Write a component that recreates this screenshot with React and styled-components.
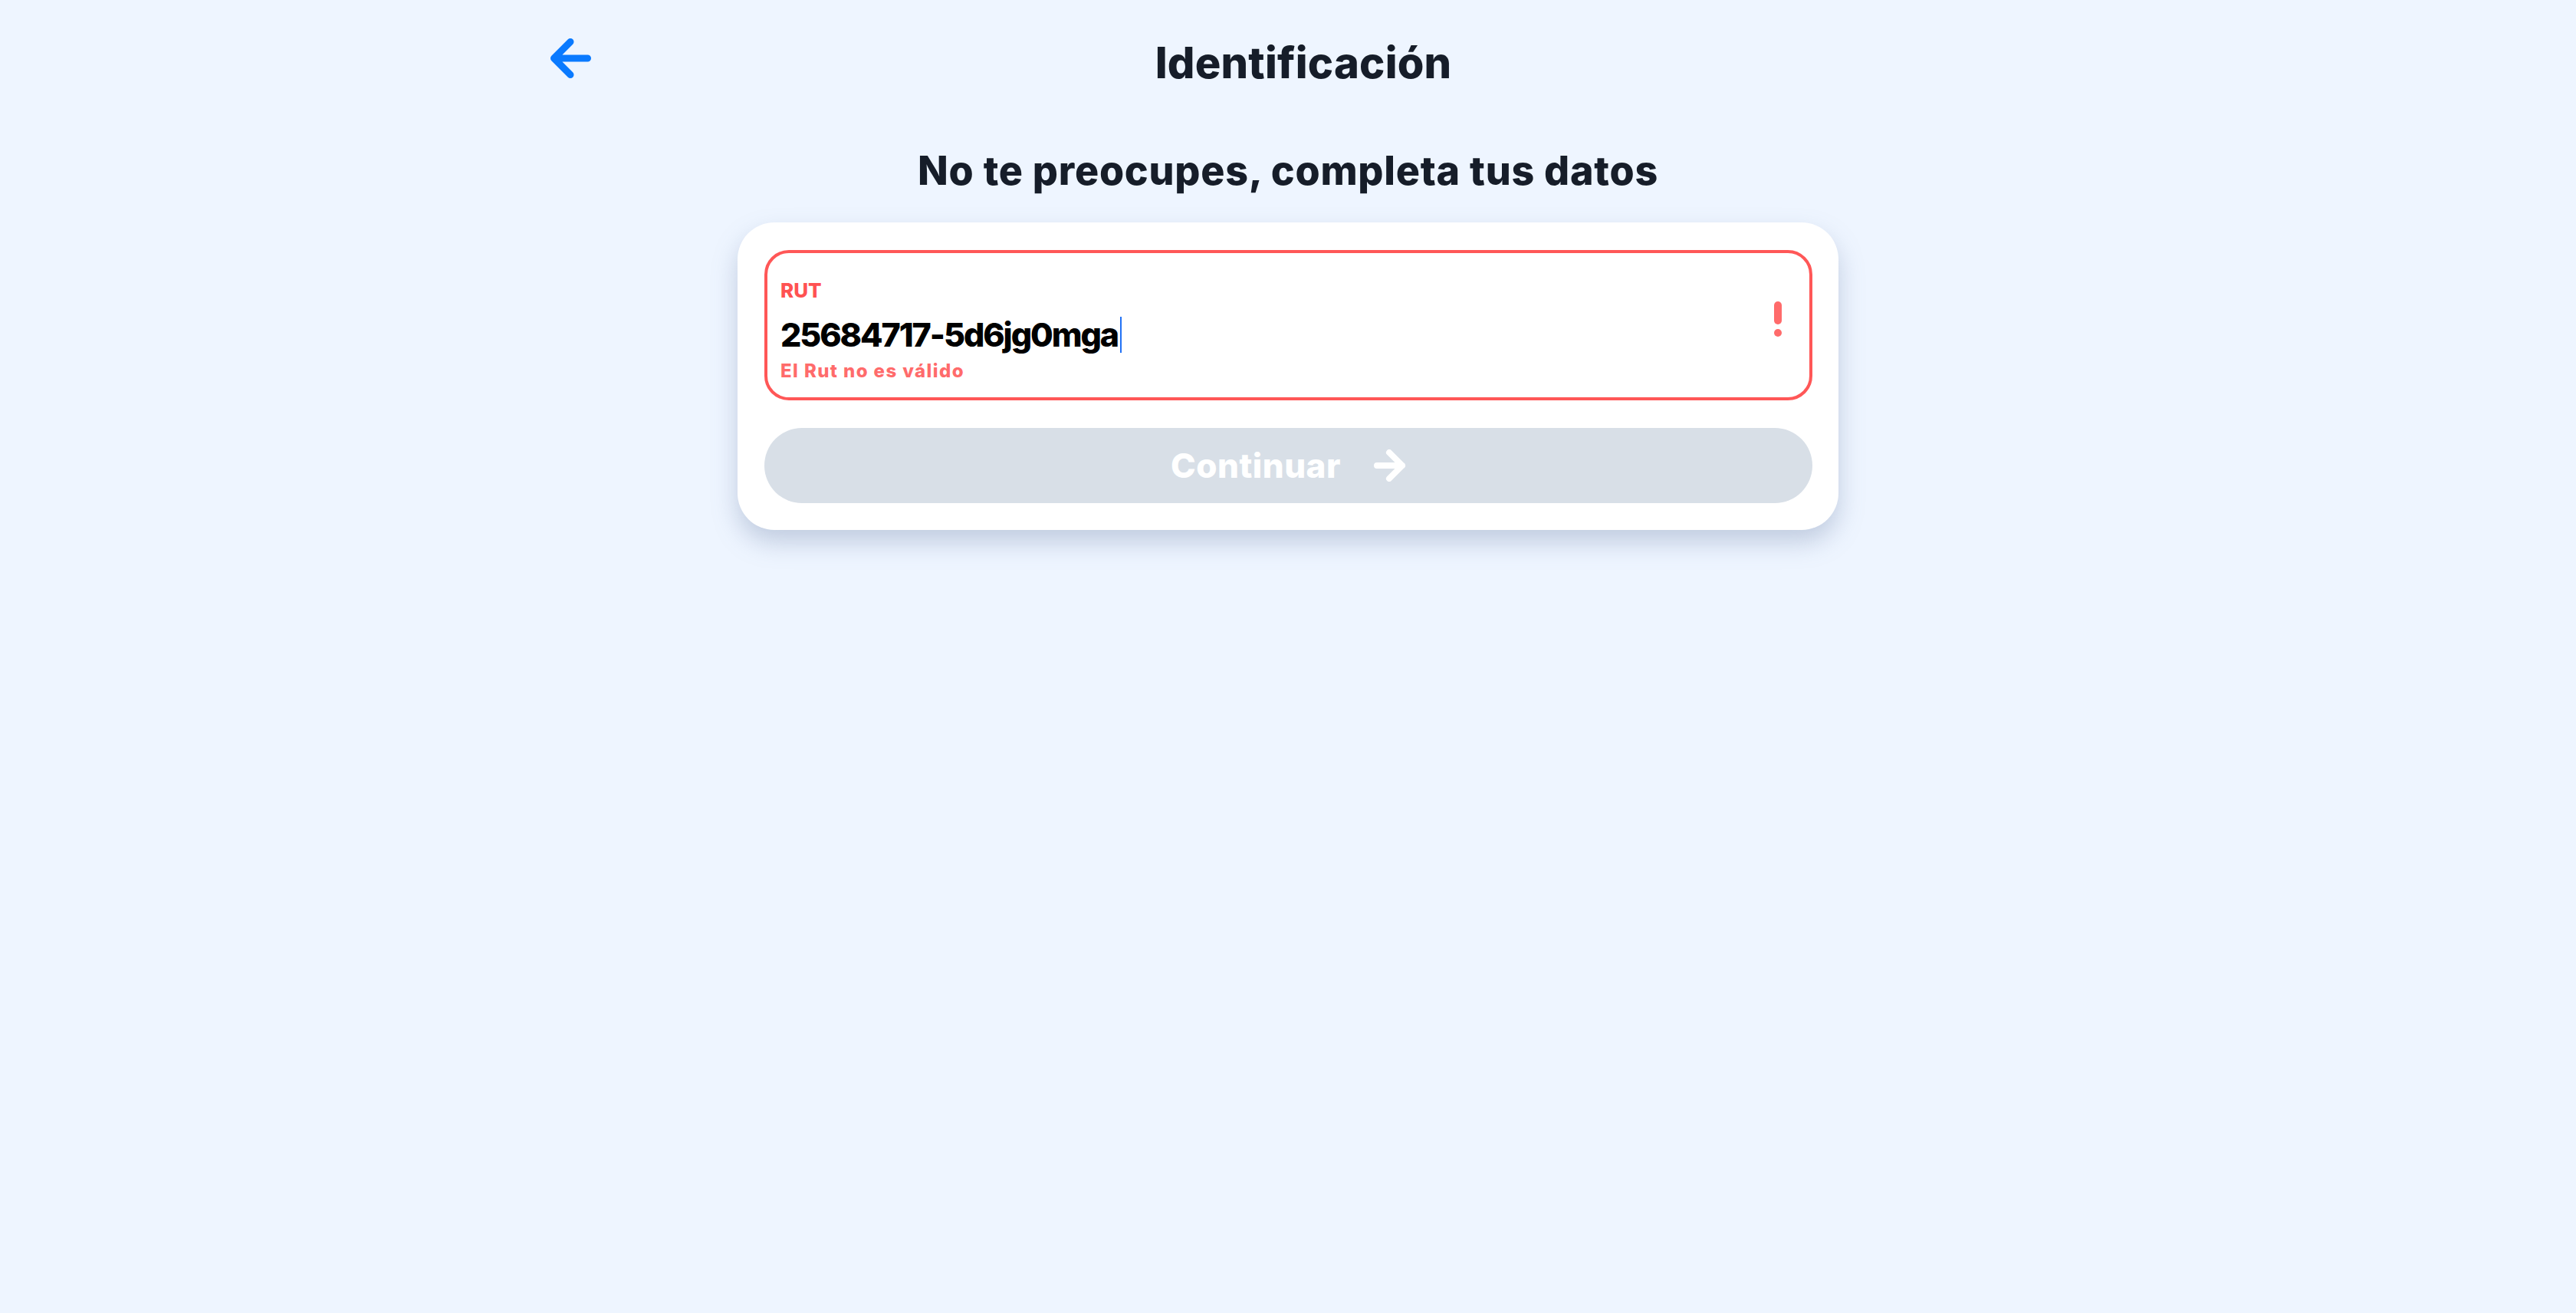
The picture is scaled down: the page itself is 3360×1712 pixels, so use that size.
import styled, { createGlobalStyle } from 'styled-components';

const GlobalStyle = createGlobalStyle`
  body {
    margin: 0;
    background: #eef5ff;
    font-family: Inter, "Noto Sans", sans-serif;
  }
`;

const Page = styled.div`
  min-height: 100vh;
  display: flex;
  flex-direction: column;
  align-items: center;
`;

const Header = styled.header`
  width: 1960px;
  display: grid;
  grid-template-columns: 80px 1fr 40px;
  align-items: start;
  padding-top: 48px;
`;

const BackButton = styled.button`
  width: 56px;
  height: 56px;
  margin-left: 16px;
  padding: 0;
  border: none;
  background: none;
  cursor: pointer;
  display: flex;
`;

const Title = styled.h1`
  margin: 2px 0 0;
  text-align: center;
  font-size: 56px;
  line-height: 64px;
  font-weight: 800;
  letter-spacing: 0.2px;
  color: #161d29;
`;

const Subtitle = styled.h2`
  margin: 79px 0 0;
  font-size: 52px;
  line-height: 60px;
  font-weight: 800;
  letter-spacing: 0.75px;
  color: #161d29;
`;

const Card = styled.div`
  margin-top: 37px;
  width: 1436px;
  box-sizing: border-box;
  padding: 36px 34px 35px 35px;
  background: #fff;
  border-radius: 48px;
  box-shadow: 0 16px 32px rgba(110, 130, 165, 0.35);
  display: flex;
  flex-direction: column;
  gap: 36px;
`;

const Field = styled.div`
  height: 196px;
  box-sizing: border-box;
  border: 4px solid ${(p) => (p.$error ? '#ff5757' : '#d7dee6')};
  border-radius: 32px;
  padding: 34px 36px 20px 17px;
  display: flex;
  align-items: flex-start;
`;

const FieldBody = styled.div`
  flex: 1;
  display: flex;
  flex-direction: column;
`;

const Label = styled.label`
  font-size: 26px;
  line-height: 30px;
  font-weight: 800;
  color: #ff5252;
`;

const Value = styled.div`
  margin-top: 16px;
  font-size: 43px;
  line-height: 52px;
  font-weight: 800;
  letter-spacing: -2.1px;
  color: #000;
  display: flex;
  align-items: center;
`;

const Caret = styled.span`
  display: inline-block;
  width: 2px;
  height: 47px;
  margin-left: 3px;
  background: #2272f5;
`;

const ErrorText = styled.div`
  margin-top: 8px;
  font-size: 24px;
  line-height: 28px;
  font-weight: 800;
  letter-spacing: 1.4px;
  color: #ff6b6b;
`;

const AlertIcon = styled.svg`
  margin-top: 29px;
  flex: none;
`;

const SubmitButton = styled.button`
  height: 98px;
  border: none;
  border-radius: 49px;
  background: #d8dfe7;
  color: #fff;
  font-family: inherit;
  font-size: 44px;
  font-weight: 800;
  letter-spacing: 0.5px;
  display: flex;
  align-items: center;
  justify-content: center;
  gap: 43px;
  cursor: not-allowed;
`;

function ArrowLeft() {
  return (
    <svg width="56" height="56" viewBox="0 0 56 56" fill="none">
      <path d="M50.5 28H6.5M28 6.5 6.5 28 28 49.5" stroke="#0a7aff" strokeWidth="9" strokeLinecap="round" strokeLinejoin="round" />
    </svg>
  );
}

function ArrowRight() {
  return (
    <svg width="42" height="42" viewBox="0 0 42 42" fill="none">
      <path d="M4 21h33M20 4l17 17-17 17" stroke="#fff" strokeWidth="8" strokeLinecap="round" strokeLinejoin="round" />
    </svg>
  );
}

export default function App() {
  return (
    <>
      <GlobalStyle />
      <Page>
        <Header>
          <BackButton aria-label="Volver">
            <ArrowLeft />
          </BackButton>
          <Title>Identificación</Title>
          <span />
        </Header>
        <Subtitle>No te preocupes, completa tus datos</Subtitle>
        <Card>
          <Field $error>
            <FieldBody>
              <Label>RUT</Label>
              <Value>
                25684717-5d6jg0mga
                <Caret />
              </Value>
              <ErrorText>El Rut no es válido</ErrorText>
            </FieldBody>
            <AlertIcon width="10" height="46" viewBox="0 0 10 46">
              <rect x="0" y="0" width="10" height="30" rx="5" fill="#ff6b6b" />
              <circle cx="5" cy="41" r="5" fill="#ff6b6b" />
            </AlertIcon>
          </Field>
          <SubmitButton disabled>
            Continuar
            <ArrowRight />
          </SubmitButton>
        </Card>
      </Page>
    </>
  );
}
